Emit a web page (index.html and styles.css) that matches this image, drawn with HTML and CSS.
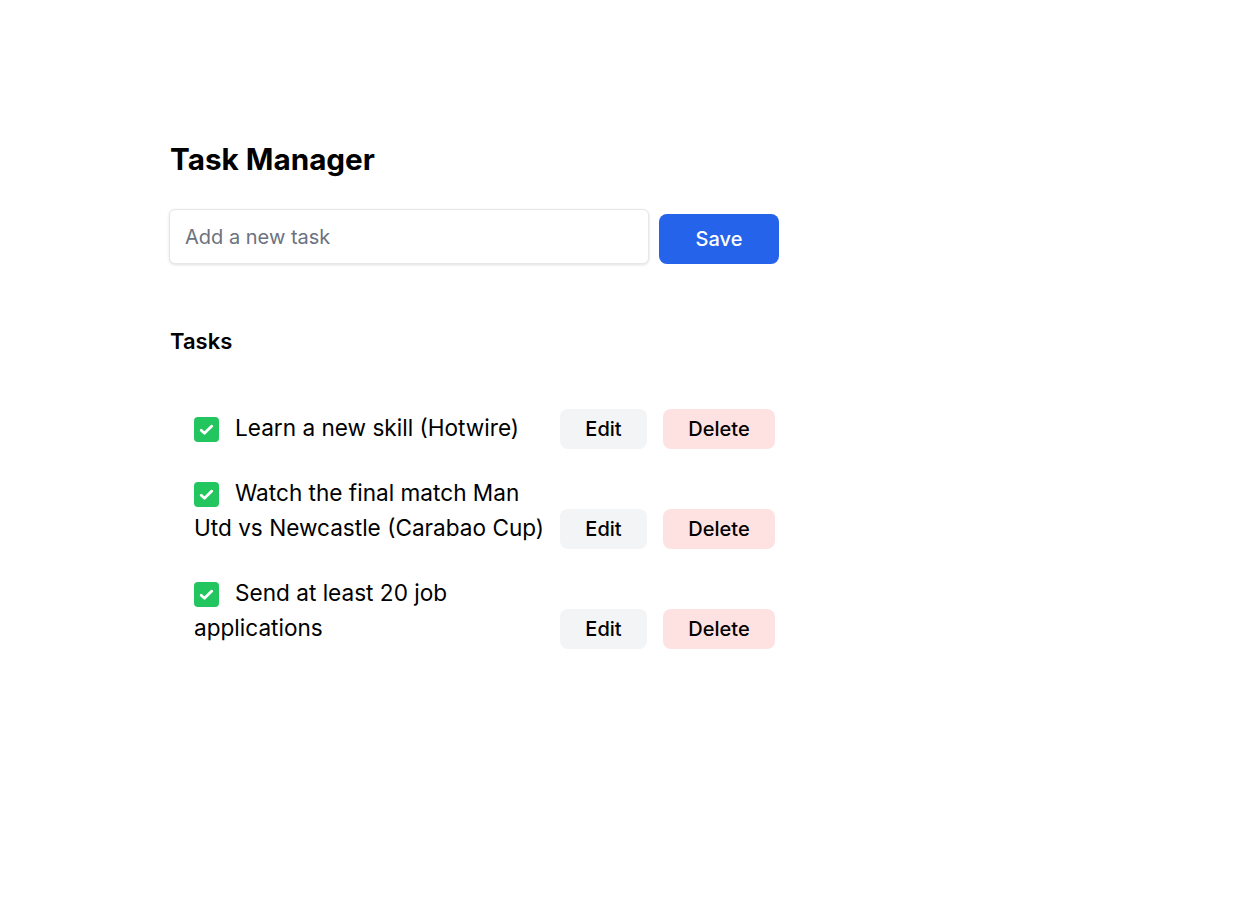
FILE: index.html
```html
<!DOCTYPE html>
<html lang="en">
<head>
<meta charset="utf-8">
<title>Task Manager</title>
<link rel="stylesheet" href="styles.css">
</head>
<body>
<main class="app">
  <h1 class="title">Task Manager</h1>
  <form class="task-form">
    <input class="task-input" type="text" placeholder="Add a new task">
    <button class="btn-save" type="button">Save</button>
  </form>
  <h2 class="section-title">Tasks</h2>
  <ul class="task-list">
    <li class="task-row">
      <div class="task-text"><span class="check"><svg viewBox="0 0 16 16" width="17" height="17"><path d="M3 8.6l3.1 3L13 4.8" fill="none" stroke="#fff" stroke-width="2.6" stroke-linecap="round" stroke-linejoin="round"/></svg></span>Learn a new skill (Hotwire)</div>
      <button class="btn btn-edit" type="button">Edit</button>
      <button class="btn btn-delete" type="button">Delete</button>
    </li>
    <li class="task-row">
      <div class="task-text"><span class="check"><svg viewBox="0 0 16 16" width="17" height="17"><path d="M3 8.6l3.1 3L13 4.8" fill="none" stroke="#fff" stroke-width="2.6" stroke-linecap="round" stroke-linejoin="round"/></svg></span>Watch the final match Man Utd vs Newcastle (Carabao Cup)</div>
      <button class="btn btn-edit" type="button">Edit</button>
      <button class="btn btn-delete" type="button">Delete</button>
    </li>
    <li class="task-row">
      <div class="task-text"><span class="check"><svg viewBox="0 0 16 16" width="17" height="17"><path d="M3 8.6l3.1 3L13 4.8" fill="none" stroke="#fff" stroke-width="2.6" stroke-linecap="round" stroke-linejoin="round"/></svg></span>Send at least 20 job applications</div>
      <button class="btn btn-edit" type="button">Edit</button>
      <button class="btn btn-delete" type="button">Delete</button>
    </li>
  </ul>
</main>
</body>
</html>
```
FILE: styles.css
```css
* { box-sizing: border-box; }
html, body { margin: 0; padding: 0; background: #fff; }
body { font-family: Inter, "Noto Sans", sans-serif; color: #000; }

.app { padding: 141px 0 0 170px; }

.title {
  margin: 0;
  font-size: 29.7px;
  line-height: 36px;
  font-weight: 700;
}

.task-form {
  display: flex;
  align-items: flex-end;
  gap: 10px;
  margin-top: 32px;
}
.task-input {
  width: 480px;
  height: 55px;
  margin-left: -1px;
  padding: 0 15px;
  border: 1px solid #e5e7eb;
  border-radius: 6px;
  box-shadow: 0 1px 3px rgba(0,0,0,0.12);
  font-family: inherit;
  font-size: 20px;
  color: #111827;
  outline: none;
}
.task-input::placeholder { color: #6b7280; }
.btn-save {
  width: 120px;
  height: 50px;
  border: 0;
  border-radius: 8px;
  background: #2563eb;
  color: #fff;
  font-family: inherit;
  font-size: 20px;
  font-weight: 500;
}

.section-title {
  margin: 62px 0 0;
  font-size: 22px;
  line-height: 30px;
  font-weight: 600;
}

.task-list {
  list-style: none;
  margin: 53px 0 0;
  padding: 0 0 0 24px;
  width: 605px;
}
.task-row {
  display: flex;
  align-items: last baseline;
  margin-bottom: 26px;
}
.task-text {
  width: 358px;
  margin-right: 8px;
  font-size: 22.6px;
  line-height: 35px;
}
.check {
  display: inline-flex;
  align-items: center;
  justify-content: center;
  width: 25px;
  height: 25px;
  margin-right: 16px;
  border-radius: 4px;
  background: #22c55e;
  vertical-align: -2px;
}
.btn {
  height: 40px;
  border: 0;
  border-radius: 8px;
  font-family: inherit;
  font-size: 20px;
  font-weight: 500;
  color: #000;
  padding: 0 24px;
}
.btn-edit { width: 87px; background: #f3f4f6; }
.btn-delete { width: 112px; margin-left: 16px; background: #fee2e2; }
```
